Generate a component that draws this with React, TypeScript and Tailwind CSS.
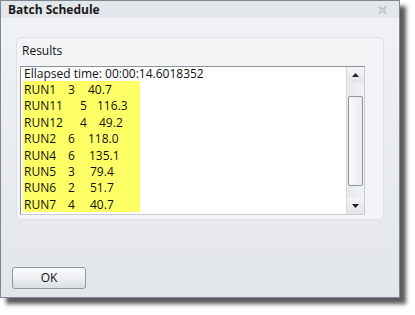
import React from "react";

const rows = [
  { n: "RUN1", a: "3", b: "40.7", w1: "w-[44px]", w2: "w-[20px]" },
  { n: "RUN11", a: "5", b: "116.3", w1: "w-[56px]", w2: "w-[17px]" },
  { n: "RUN12", a: "4", b: "49.2", w1: "w-[56px]", w2: "w-[19px]" },
  { n: "RUN2", a: "6", b: "118.0", w1: "w-[44px]", w2: "w-[20px]" },
  { n: "RUN4", a: "6", b: "135.1", w1: "w-[44px]", w2: "w-[21px]" },
  { n: "RUN5", a: "3", b: "79.4", w1: "w-[44px]", w2: "w-[22px]" },
  { n: "RUN6", a: "2", b: "51.7", w1: "w-[44px]", w2: "w-[22px]" },
  { n: "RUN7", a: "4", b: "40.7", w1: "w-[44px]", w2: "w-[22px]" },
];

export default function App() {
  return (
    <div className="w-[415px] h-[315px] bg-white" style={{ fontFamily: '"Open Sans", "Noto Sans", sans-serif' }}>
      <div className="w-[400px] h-[298px] flex flex-col border border-[#7d8791] shadow-[6px_6px_4px_rgba(50,50,50,0.8)] bg-gradient-to-b from-[#f0f2f4] to-[#e3e6e9]">
        {/* Title bar */}
        <div className="h-[17px] flex items-center justify-between bg-[#e3e6ea] px-[7px]">
          <span className="text-[12px] font-bold text-[#1a1a1a] leading-none">Batch Schedule</span>
          <svg width="9" height="8" viewBox="0 0 9 8" className="mr-[5px]">
            <path d="M1 0.5 L8 7.5 M8 0.5 L1 7.5" stroke="#b0b4b8" strokeWidth="2.2" />
            <path d="M1 0.5 L8 7.5 M8 0.5 L1 7.5" stroke="#eef0f2" strokeWidth="0.8" />
          </svg>
        </div>
        {/* Body */}
        <div className="flex-1 flex flex-col px-[15px] pt-[19px]">
          <div className="h-[183px] rounded-[5px] border border-[#dde1e6] bg-[#f2f4f6] px-[3px] pt-[3px] flex flex-col">
            <div className="text-[12px] text-[#111] leading-[16px] pl-[2px] h-[25px] pt-[2px]">Results</div>
            <div className="h-[149px] w-[345px] border border-[#8a9098] border-b-[#c8ccd1] border-r-[#c8ccd1] bg-white flex">
              <div className="flex-1 pl-[2px] text-[12px] text-[#111]">
                <div className="h-[14px] leading-[13px] pl-[1px]">Ellapsed time: 00:00:14.6018352</div>
                <div className="w-[117px] bg-[#ffff66]">
                  {rows.map((r) => (
                    <div key={r.n} className="h-[16.4px] leading-[14.4px] pt-[2px] flex pl-[1px]">
                      <span className={r.w1}>{r.n}</span>
                      <span className={r.w2}>{r.a}</span>
                      <span>{r.b}</span>
                    </div>
                  ))}
                </div>
              </div>
              {/* Scrollbar */}
              <div className="w-[18px] flex flex-col border-l border-[#d6dade] bg-gradient-to-r from-[#e6e8eb] to-[#f1f2f4]">
                <div className="h-[16px] flex items-center justify-center bg-gradient-to-b from-[#f5f6f7] to-[#e2e5e8]">
                  <svg width="7" height="4" viewBox="0 0 7 4"><path d="M3.5 0 L7 4 L0 4 Z" fill="#222" /></svg>
                </div>
                <div className="h-[13px]" />
                <div className="h-[90px] mx-[1px] rounded-[2px] border border-[#8e969e] bg-gradient-to-r from-[#f7f8f9] to-[#e9ecef]" />
                <div className="flex-1" />
                <div className="h-[16px] flex items-center justify-center bg-gradient-to-b from-[#f1f3f4] to-[#e2e5e8]">
                  <svg width="7" height="4" viewBox="0 0 7 4"><path d="M0 0 L7 0 L3.5 4 Z" fill="#222" /></svg>
                </div>
              </div>
            </div>
          </div>
          <div className="flex-1" />
          <div className="pb-[8px] -ml-[4px]">
            <button className="w-[74px] h-[22px] rounded-[3px] border border-[#8c97a2] bg-gradient-to-b from-[#fbfbfc] via-[#eef0f2] to-[#dadee2] text-[12px] text-[#111] leading-none">
              OK
            </button>
          </div>
        </div>
      </div>
    </div>
  );
}
